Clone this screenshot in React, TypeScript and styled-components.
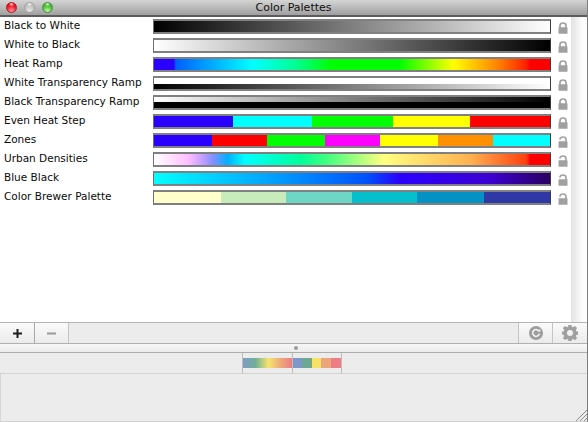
import React from "react";
import styled, { createGlobalStyle } from "styled-components";

const Global = createGlobalStyle`
  html, body { margin: 0; padding: 0; background: #ececec; }
  #root { width: 588px; height: 422px; overflow: hidden; }
  * { box-sizing: border-box; }
`;

const Window = styled.div`
  width: 588px;
  height: 422px;
  display: flex;
  flex-direction: column;
  font-family: "DejaVu Sans", sans-serif;
  color: #000;
  background: #ececec;
  border-right: 1px solid #7c7c7c;
`;

const TitleBar = styled.div`
  height: 17px;
  flex: none;
  position: relative;
  display: flex;
  align-items: center;
  justify-content: center;
  background: linear-gradient(#d4d4d4, #a0a0a0);
  border-bottom: 2px solid #5c5c5c;
  font-size: 11px;
  line-height: 15px;
  color: #101010;
`;

const Lights = styled.div`
  position: absolute;
  left: 6px;
  top: 2px;
  display: flex;
  gap: 7px;
`;

const Light = styled.span<{ $c: string; $d: string; $hi: string }>`
  width: 11px;
  height: 11px;
  border-radius: 50%;
  border: 1px solid ${(p) => p.$d};
  background:
    radial-gradient(circle at 50% 12%, #ffffffd0 0, #ffffff00 30%),
    radial-gradient(circle at 50% 90%, ${(p) => p.$hi} 0, ${(p) => p.$c} 62%);
`;

const ListArea = styled.div`
  height: 305px;
  flex: none;
  display: flex;
  background: #fff;
`;

const List = styled.div`
  flex: 1;
  display: flex;
  flex-direction: column;
`;

const Row = styled.div`
  height: 19px;
  flex: none;
  display: flex;
  align-items: center;
`;

const Label = styled.span`
  width: 153px;
  flex: none;
  padding: 0 0 2px 4px;
  font-size: 10.5px;
  line-height: 13px;
  white-space: nowrap;
  color: #0a0a0a;
`;

const Bar = styled.div<{ $bg: string }>`
  width: 398px;
  height: 15px;
  flex: none;
  border-style: solid;
  border-color: #808080 #3a3a3a #808080 #707070;
  border-width: 2px 1px 2px 1px;
  background: ${(p) => p.$bg};
`;

const LockSlot = styled.div`
  width: 20px;
  flex: none;
  margin-top: 3px;
  display: flex;
  justify-content: center;
  padding-left: 3px;
`;

const Scroller = styled.div`
  width: 16px;
  flex: none;
  background: linear-gradient(90deg, #e2e2e2, #f8f8f8 60%, #fff);
`;

const Toolbar = styled.div`
  height: 22px;
  flex: none;
  display: flex;
  justify-content: space-between;
  background: #ececec;
  border-top: 1px solid #b4b4b4;
  border-bottom: 1px solid #b0b0b0;
`;

const ButtonGroup = styled.div`
  display: flex;
`;

const ToolButton = styled.button<{ $dim?: boolean; $edge?: boolean; $last?: boolean; $w: number }>`
  width: ${(p) => p.$w}px;
  height: 20px;
  padding: 0;
  margin: 0;
  display: flex;
  align-items: center;
  justify-content: center;
  border: none;
  border-right: ${(p) => (p.$last ? "none" : `1px solid ${p.$dim ? "#c4c4c4" : "#a8a8a8"}`)};
  border-left: ${(p) => (p.$edge ? "1px solid #c4c4c4" : "none")};
  background: linear-gradient(#fafafa, #ebebeb);
`;

const Divider = styled.div`
  height: 9px;
  flex: none;
  display: flex;
  align-items: center;
  justify-content: center;
  padding-left: 4px;
  background: linear-gradient(#f7f7f7, #ebebeb);
  border-bottom: 1px solid #adadad;
`;

const Dot = styled.span`
  width: 4px;
  height: 4px;
  border-radius: 50%;
  background: #9a9a9a;
`;

const SwatchStrip = styled.div`
  height: 21px;
  flex: none;
  display: flex;
  justify-content: center;
  background: #ececec;
  border-bottom: 1px solid #d2d2d2;
`;

const SwatchCell = styled.div<{ $first?: boolean }>`
  width: ${(p) => (p.$first ? 51 : 49)}px;
  height: 20px;
  padding: 5px 0 0;
  margin-left: ${(p) => (p.$first ? "-3px" : "0")};
  border-right: 1px solid #bdbdbd;
  border-left: ${(p) => (p.$first ? "1px solid #bdbdbd" : "none")};
`;

const SwatchBar = styled.div<{ $bg: string }>`
  height: 10px;
  background: ${(p) => p.$bg};
`;

const BottomPanel = styled.div`
  flex: 1;
  position: relative;
  border-left: 1px solid #d6d6d6;
  border-bottom: 1px solid #d2d2d2;
  background: #ececec;
`;

const Grip = styled.svg`
  position: absolute;
  right: 0;
  bottom: 0;
`;

const hard = (stops: [string, number][]) => {
  let prev = 0;
  const out: string[] = [];
  for (const [c, x] of stops) {
    out.push(`${c} ${prev}px ${x}px`);
    prev = x;
  }
  return `linear-gradient(90deg, ${out.join(", ")})`;
};

const heat =
  "linear-gradient(90deg,#2a00ff 0,#2a00ff 5%,#0060ff 5.5%,#00ffff 25%,#00ff90 36%,#00ff00 45%,#00ff00 62%,#ffff00 75.6%,#ff8000 87%,#ff2000 94%,#ff0000 95%)";

const rows: { name: string; bg: string; open?: boolean }[] = [
  { name: "Black to White", bg: "linear-gradient(90deg,#000,#fff)" },
  { name: "White to Black", bg: "linear-gradient(90deg,#fff,#000)" },
  { name: "Heat Ramp", bg: heat },
  {
    name: "White Transparency Ramp",
    bg: "linear-gradient(#fff 0 50%, transparent 50%), linear-gradient(90deg,#000,#fff)",
  },
  {
    name: "Black Transparency Ramp",
    bg: "linear-gradient(transparent 0 50%, #000 50%), linear-gradient(90deg,#fff,#000)",
  },
  {
    name: "Even Heat Step",
    bg: hard([["#2a00ff", 79], ["#00ffff", 158], ["#00ff00", 239], ["#ffff00", 316], ["#ff0000", 398]]),
  },
  {
    name: "Zones",
    bg: hard([
      ["#2a00ff", 58], ["#ff0000", 113], ["#00ff00", 171], ["#ff00ff", 226],
      ["#ffff00", 284], ["#ff9000", 339], ["#00ffff", 398],
    ]),
    open: true,
  },
  {
    name: "Urban Densities",
    bg: "linear-gradient(90deg,#fff 0,#ffc0ff 8.5%,#c8a0ff 12%,#8090ff 15%,#00b0ff 18.6%,#00ffff 23%,#00ff99 37%,#40ff80 43.5%,#ffff80 58%,#ffb050 80%,#ff4010 94%,#ff0000 95%)",
    open: true,
  },
  {
    name: "Blue Black",
    bg: "linear-gradient(90deg,#00ffff 0,#0090ff 35%,#0050ff 54%,#2a00ff 62%,#3c00d0 85%,#2a0060 100%)",
    open: true,
  },
  {
    name: "Color Brewer Palette",
    bg: hard([
      ["#ffffcc", 67], ["#c7ebbb", 132], ["#6dd6c4", 198], ["#06bfcc", 263],
      ["#0492c4", 330], ["#3038a8", 398],
    ]),
    open: true,
  },
];

const Lock = ({ open }: { open?: boolean }) => (
  <svg width="10" height="12" viewBox="0 0 10 12" aria-hidden="true">
    {open ? (
      <path d="M1.8 3.6C2 1.8 3.3 1 5 1s3 .8 3 2.6V6" fill="none" stroke="#a4a4a4" strokeWidth="1.7" />
    ) : (
      <path d="M2 6V3.6C2 1.9 3.3 1 5 1s3 .9 3 2.6V6" fill="none" stroke="#a0a0a0" strokeWidth="1.7" />
    )}
    <rect x="0.5" y="5.2" width="9" height="6.6" rx="0.6" fill="#a0a0a0" />
  </svg>
);

const Plus = () => (
  <svg width="9" height="9" viewBox="0 0 9 9" aria-hidden="true">
    <path d="M3.5 0h2v3.5H9v2H5.5V9h-2V5.5H0v-2h3.5z" fill="#1e1e1e" />
  </svg>
);

const Minus = () => (
  <svg width="9" height="3" viewBox="0 0 9 3" aria-hidden="true">
    <rect width="9" height="2" y="0.5" fill="#9a9a9a" />
  </svg>
);

const Refresh = () => (
  <svg width="14" height="14" viewBox="0 0 14 14" aria-hidden="true">
    <circle cx="7" cy="7" r="7" fill="#9c9c9c" />
    <path d="M10 5.2A3.4 3.4 0 1 0 10.4 7.6" fill="none" stroke="#efefef" strokeWidth="1.7" />
    <path d="M8.2 5.6h3.2V2.6z" fill="#efefef" />
  </svg>
);

const Gear = () => (
  <svg width="16" height="16" viewBox="0 0 16 16" aria-hidden="true">
    <path
      fillRule="evenodd"
      fill="#a0a0a0"
      d="M6.5 0h3l.4 2.3 1.2.5L13 1.5l2.1 2.1-1.3 1.9.5 1.2 2.3.4v3l-2.3.4-.5 1.2 1.3 1.9-2.1 2.1-1.9-1.3-1.2.5-.4 2.3h-3l-.4-2.3-1.2-.5L3 15.6.9 13.5l1.3-1.9-.5-1.2L0 10V7l1.7-.3.5-1.2L.9 3.6 3 1.5l1.9 1.3 1.2-.5zM8 5.4a3 3 0 1 0 0 6 3 3 0 0 0 0-6z"
      transform="translate(0 -0.5)"
    />
  </svg>
);

export default function App() {
  return (
    <Window>
      <Global />
      <TitleBar>
        <Lights>
          <Light $c="#ee1020" $d="#b01c28" $hi="#ff9aa0" />
          <Light $c="#c0c0c0" $d="#a0a0a0" $hi="#e8e8e8" />
          <Light $c="#40b82c" $d="#4a9040" $hi="#c0f8a8" />
        </Lights>
        Color Palettes
      </TitleBar>
      <ListArea>
        <List>
          {rows.map((r) => (
            <Row key={r.name}>
              <Label>{r.name}</Label>
              <Bar $bg={r.bg} />
              <LockSlot>
                <Lock open={r.open} />
              </LockSlot>
            </Row>
          ))}
        </List>
        <Scroller />
      </ListArea>
      <Toolbar>
        <ButtonGroup>
          <ToolButton $w={35} aria-label="Add"><Plus /></ToolButton>
          <ToolButton $w={34} $dim aria-label="Remove"><Minus /></ToolButton>
        </ButtonGroup>
        <ButtonGroup>
          <ToolButton $w={35} $dim $edge aria-label="Reload"><Refresh /></ToolButton>
          <ToolButton $w={34} $dim $last aria-label="Settings"><Gear /></ToolButton>
        </ButtonGroup>
      </Toolbar>
      <Divider><Dot /></Divider>
      <SwatchStrip>
        <SwatchCell $first>
          <SwatchBar $bg="linear-gradient(90deg,#7f9cc8,#6fae98 25%,#f6e46e 52%,#eea77a 78%,#ee7c84)" />
        </SwatchCell>
        <SwatchCell>
          <SwatchBar $bg="linear-gradient(90deg,#7f96c8 0 19%,#6fa892 19% 40%,#f8e266 40% 59%,#eca47c 59% 80%,#ee7c84 80%)" />
        </SwatchCell>
      </SwatchStrip>
      <BottomPanel>
        <Grip width="12" height="12" viewBox="0 0 12 12" aria-hidden="true">
          <path d="M1 12L12 1M5 12L12 5M9 12L12 9" stroke="#8c8c8c" strokeWidth="1" />
        </Grip>
      </BottomPanel>
    </Window>
  );
}
